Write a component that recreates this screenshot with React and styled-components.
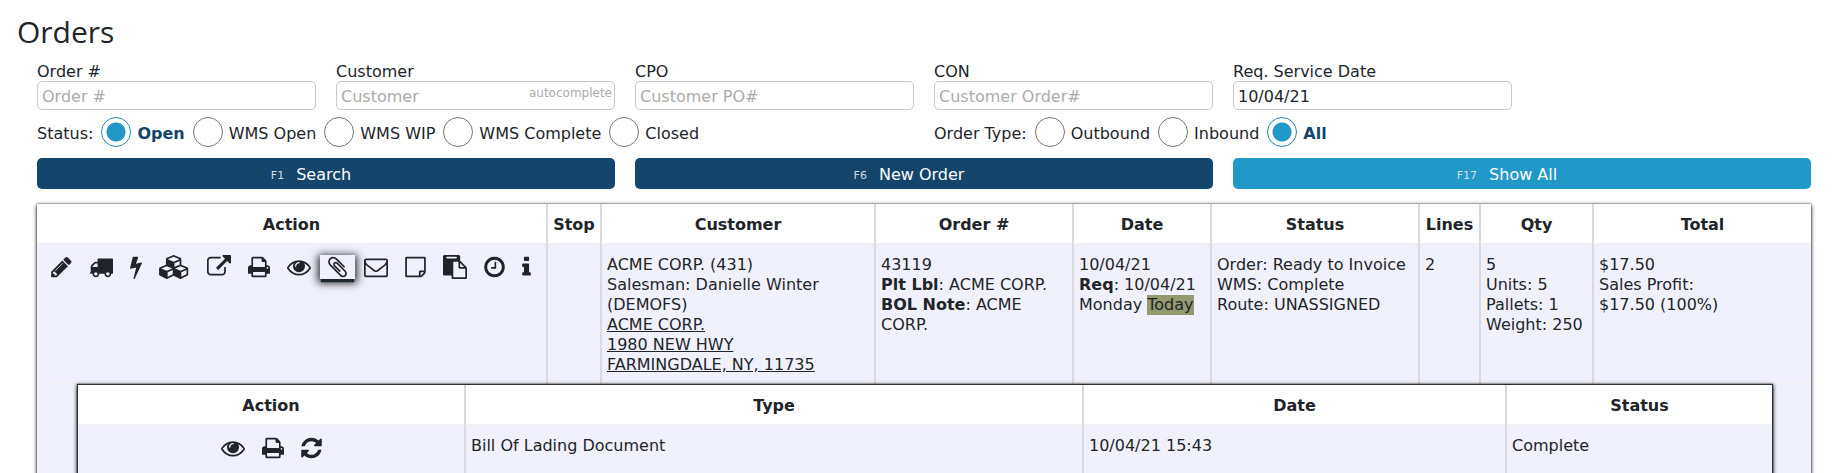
import React, { useState } from "react";
import styled, { createGlobalStyle } from "styled-components";

const GlobalStyle = createGlobalStyle`
    * {
        box-sizing: border-box;
    }
    body {
        margin: 0;
        background-color: #ffffff;
        color: #212529;
        font-family: "DejaVu Sans", Verdana, sans-serif;
        font-size: 16px;
        line-height: 20px;
        overflow: hidden;
    }
`;
const Page = styled.main`
    padding: 12px 27px 0 17px;
`;
const Title = styled.h1`
    margin: 0;
    font-family: "Open Sans", sans-serif;
    font-size: 30px;
    font-weight: 400;
    line-height: 40px;
`;
const Content = styled.div`
    padding-left: 20px;
`;
const Filters = styled.form`
    display: grid;
    grid-template-columns: repeat(6, 1fr);
    column-gap: 20px;
    padding-top: 11px;
`;
const Field = styled.div`
    position: relative;
    display: flex;
    flex-direction: column;
`;
const FieldLabel = styled.label`
    line-height: 18px;
`;
const Input = styled.input`
    width: 100%;
    height: 29px;
    padding: 2px 4px 0;
    border: 1px solid #c8c8c8;
    border-radius: 5px;
    background-color: #ffffff;
    color: #212529;
    font-family: inherit;
    font-size: 16px;
    outline: none;
    &::placeholder {
        color: #acacac;
        opacity: 1;
    }
`;
const Hint = styled.span`
    position: absolute;
    right: 3px;
    bottom: 7px;
    color: #acacac;
    font-size: 12px;
    line-height: 20px;
`;
const RadioGroup = styled.fieldset`
    grid-column: span 3;
    display: flex;
    align-items: center;
    gap: 8px;
    height: 30px;
    margin: 7px 0 11px;
    padding: 0;
    border: 0;
`;
const RadioLabel = styled.label`
    display: flex;
    align-items: center;
    gap: 6px;
    white-space: nowrap;
    &:has(input:checked) {
        color: #14456c;
        font-weight: 700;
    }
`;
const RadioText = styled.span`
    padding-top: 4px;
`;
const Radio = styled.input`
    appearance: none;
    width: 30px;
    height: 30px;
    margin: 0;
    border: 1px solid #77776a;
    border-radius: 50%;
    background-color: #ffffff;
    &:checked {
        border-color: #2484b4;
        background: radial-gradient(circle, #2199c8 9px, #ffffff 10px);
    }
`;
const Button = styled.button`
    grid-column: span 2;
    display: flex;
    justify-content: center;
    align-items: center;
    gap: 12px;
    height: 31px;
    padding: 1px 30px 0 0;
    border: 0;
    border-radius: 5px;
    background-color: ${props => props.$light ? "#2199c8" : "#14456c"};
    color: #ffffff;
    font-family: inherit;
    font-size: 16px;
    cursor: pointer;
`;
const Key = styled.small`
    padding-top: 3px;
    color: #d3dce4;
    font-size: 11px;
`;
const Table = styled.table`
    width: 100%;
    table-layout: fixed;
    border-spacing: 0;
    box-shadow: 0 1px 4px #000000, 0 0 1px #20282a;
`;
const OrdersTable = styled(Table)`
    margin-top: 15px;
`;
const DocumentsTable = styled(Table)`
    border: 1px solid #2b3436;
`;
const Col = styled.col`
    width: ${props => props.$w}px;
`;
const Th = styled.th`
    height: 40px;
    padding: 2px 0 0;
    border-bottom: 1px solid #f2f0ef;
    background-color: #ffffff;
    font-weight: 700;
    & + & {
        border-left: 2px solid #d9d9e0;
    }
`;
const Td = styled.td`
    height: ${props => props.$h || 50}px;
    padding: 11px 0 2px 5px;
    border-bottom: 1px solid #f2f0ef;
    background-color: #f1f1fd;
    vertical-align: top;
    & + & {
        border-left: 2px solid #d9d9e0;
    }
`;
const NestedTd = styled.td`
    padding: 0 42px 30px 40px;
    background-color: #f1f1fd;
`;
const Line = styled.div`
    min-height: 20px;
`;
const Address = styled.a`
    display: block;
    color: inherit;
    text-decoration: underline;
`;
const Today = styled.span`
    display: inline-block;
    background-color: #949a70;
`;
const Actions = styled.div`
    display: flex;
    justify-content: ${props => props.$center ? "center" : "flex-start"};
    gap: 1px;
    padding: ${props => props.$center ? "0 5px 0 0" : "0 0 0 1px"};
`;
const IconButton = styled.button`
    display: flex;
    height: 24px;
    padding: 0 8px;
    border: 0;
    background-color: transparent;
    color: #212529;
    cursor: pointer;
    ${props => props.$active && `
        background-color: #f1f1fd;
        box-shadow: 0 4px 1px -1px #20282a, 0 2px 8px 2px #20282a;
    `}
`;
const IconSvg = styled.svg`
    display: block;
    height: 24px;
    fill: currentColor;
`;

// [viewBox min-x, viewBox width, path], all on a 1792 high grid
const ICONS = {
    edit: [ 128, 1536, "M491 1536l91-91-235-235-91 91v107h128v128h107zm523-928q0-22-22-22-10 0-17 7l-542 542q-7 7-7 17 0 22 22 22 10 0 17-7l542-542q7-7 7-17zm-54-192l416 416-832 832h-416v-416zm683 96q0 53-37 90l-166 166-416-416 166-165q36-38 90-38 53 0 91 38l235 234q37 39 37 91z" ],
    truck: [ 0, 1792, "M640 1408q0-52-38-90t-90-38-90 38-38 90 38 90 90 38 90-38 38-90zm-384-512h384v-256h-158q-13 0-22 9l-195 195q-9 9-9 22v30zm1280 512q0-52-38-90t-90-38-90 38-38 90 38 90 90 38 90-38 38-90zm256-1088v1024q0 15-4 26.5t-13.5 18.5-16.5 11.5-23.5 6-22.5 2-25.5 0-22.5-.5q0 106-75 181t-181 75-181-75-75-181h-384q0 106-75 181t-181 75-181-75-75-181h-64q-3 0-22.5.5t-25.5 0-22.5-2-23.5-6-16.5-11.5-13.5-18.5-4-26.5q0-26 19-45t45-19v-320q0-8-.5-35t0-38 2.5-34.5 6.5-37 14-30.5 22.5-30l198-198q19-19 50.5-32t58.5-13h160v-192q0-26 19-45t45-19h1024q26 0 45 19t19 45z" ],
    bolt: [ 448, 896, "M1333 566q18 20 7 44l-540 1157q-13 25-42 25-4 0-14-2-17-5-25.5-19t-4.5-30l197-808-406 101q-4 1-12 1-18 0-31-11-18-15-13-39l201-825q4-14 16-23t28-9h328q19 0 32 12.5t13 29.5q0 8-5 18l-171 463 396-98q8-2 12-2 19 0 34 15z" ],
    cubes: [ 0, 2304, "M640 1632l384-192v-314l-384 164v342zm-64-454l404-173-404-173-404 173zm1088 454l384-192v-314l-384 164v342zm-64-454l404-173-404-173-404 173zm-448-293l384-165v-266l-384 164v267zm-64-379l441-189-441-189-441 189zm1088 518v416q0 36-19 67t-52 47l-448 224q-25 14-57 14t-57-14l-448-224q-4-2-7-4-2 2-7 4l-448 224q-25 14-57 14t-57-14l-448-224q-33-16-52-47t-19-67v-416q0-38 21.5-70t56.5-48l434-186v-400q0-38 21.5-70t56.5-48l448-192q23-10 50-10t50 10l448 192q35 16 56.5 48t21.5 70v400l434 186q36 16 57 48t21 70z" ],
    open: [ 0, 1792, "M1408 928v320q0 119-84.5 203.5t-203.5 84.5h-832q-119 0-203.5-84.5t-84.5-203.5v-832q0-119 84.5-203.5t203.5-84.5h704q14 0 23 9t9 23v64q0 14-9 23t-23 9h-704q-66 0-113 47t-47 113v832q0 66 47 113t113 47h832q66 0 113-47t47-113v-320q0-14 9-23t23-9h64q14 0 23 9t9 23zm384-864v512q0 26-19 45t-45 19-45-19l-176-176-652 652q-10 10-23 10t-23-10l-114-114q-10-10-10-23t10-23l652-652-176-176q-19-19-19-45t19-45 45-19h512q26 0 45 19t19 45z" ],
    print: [ 64, 1664, "M448 1536h896v-256h-896v256zm0-640h896v-384h-160q-40 0-68-28t-28-68v-160h-640v640zm1152 64q0-26-19-45t-45-19-45 19-19 45 19 45 45 19 45-19 19-45zm128 0v416q0 13-9.5 22.5t-22.5 9.5h-224v160q0 40-28 68t-68 28h-960q-40 0-68-28t-28-68v-160h-224q-13 0-22.5-9.5t-9.5-22.5v-416q0-79 56.5-135.5t135.5-56.5h64v-544q0-40 28-68t68-28h672q40 0 88 20t76 48l152 152q28 28 48 76t20 88v256h64q79 0 135.5 56.5t56.5 135.5z" ],
    view: [ 0, 1792, "M1664 960q-152-236-381-353 61 104 61 225 0 185-131.5 316.5t-316.5 131.5-316.5-131.5-131.5-316.5q0-121 61-225-229 117-381 353 133 205 333.5 326.5t434.5 121.5 434.5-121.5 333.5-326.5zm-720-384q0-20-14-34t-34-14q-125 0-214.5 89.5t-89.5 214.5q0 20 14 34t34 14 34-14 14-34q0-86 61-147t147-61q20 0 34-14t14-34zm848 384q0 34-20 69-140 230-376.5 368.5t-499.5 138.5-499.5-139-376.5-368q-20-35-20-69t20-69q140-229 376.5-368t499.5-139 499.5 139 376.5 368q20 35 20 69z" ],
    attach: [ 192, 1408, "M1596 1385q0 117-79 196t-196 79q-135 0-235-100l-777-776q-113-115-113-271 0-159 110-270t269-111q158 0 273 113l605 606q10 10 10 22 0 16-30.5 46.5t-46.5 30.5q-13 0-23-10l-606-607q-79-77-181-77-106 0-179 75t-73 181q0 105 76 181l776 777q63 63 145 63 64 0 106-42t42-106q0-82-63-145l-581-581q-26-24-60-24-29 0-48 19t-19 48q0 32 25 59l410 410q10 10 10 22 0 16-31 47t-47 31q-12 0-22-10l-410-410q-63-61-63-149 0-82 57-139t139-57q88 0 149 63l581 581q100 98 100 235z" ],
    mail: [ 0, 1792, "M1664 1504v-768q-32 36-69 66-268 206-426 338-51 43-83 67t-86.5 48.5-102.5 24.5h-2q-48 0-102.5-24.5t-86.5-48.5-83-67q-158-132-426-338-37-30-69-66v768q0 13 9.5 22.5t22.5 9.5h1472q13 0 22.5-9.5t9.5-22.5zm0-1051v-24.5l-.5-13-3-12.5-5.5-9-9-7.5-14-2.5h-1472q-13 0-22.5 9.5t-9.5 22.5q0 168 147 284 193 152 401 317 6 5 35 29.5t46 37.5 44.5 31.5 50.5 27.5 43 9h2q20 0 43-9t50.5-27.5 44.5-31.5 46-37.5 35-29.5q208-165 401-317 54-43 100.5-115.5t46.5-131.5zm128-37v1088q0 66-47 113t-113 47h-1472q-66 0-113-47t-47-113v-1088q0-66 47-113t113-47h1472q66 0 113 47t47 113z" ],
    note: [ 0, 1536, "M1400 1280h-248v248q29-10 41-22l185-185q12-12 22-41zm-280-128h288v-896h-1280v1280h896v-288q0-40 28-68t68-28zm416-928v1024q0 40-20 88t-48 76l-184 184q-28 28-76 48t-88 20h-1024q-40 0-68-28t-28-68v-1344q0-40 28-68t68-28h1344q40 0 68 28t28 68z" ],
    paste: [ 0, 1792, "M768 1664h896v-640h-416q-40 0-68-28t-28-68v-416h-384v1152zm256-1440v-64q0-13-9.5-22.5t-22.5-9.5h-704q-13 0-22.5 9.5t-9.5 22.5v64q0 13 9.5 22.5t22.5 9.5h704q13 0 22.5-9.5t9.5-22.5zm256 672h299l-299-299v299zm512 128v672q0 40-28 68t-68 28h-960q-40 0-68-28t-28-68v-160h-544q-40 0-68-28t-28-68v-1344q0-40 28-68t68-28h1088q40 0 68 28t28 68v328q21 13 36 28l408 408q28 28 48 76t20 88z" ],
    clock: [ 128, 1536, "M1024 544v448q0 14-9 23t-23 9h-320q-14 0-23-9t-9-23v-64q0-14 9-23t23-9h224v-352q0-14 9-23t23-9h64q14 0 23 9t9 23zm416 352q0-148-73-273t-198-198-273-73-273 73-198 198-73 273 73 273 198 198 273 73 273-73 198-198 73-273zm224 0q0 209-103 385.5t-279.5 279.5-385.5 103-385.5-103-279.5-279.5-103-385.5 103-385.5 279.5-279.5 385.5-103 385.5 103 279.5 279.5 103 385.5z" ],
    info: [ 576, 640, "M1216 1344v128q0 26-19 45t-45 19h-512q-26 0-45-19t-19-45v-128q0-26 19-45t45-19h64v-384h-64q-26 0-45-19t-19-45v-128q0-26 19-45t45-19h384q26 0 45 19t19 45v576h64q26 0 45 19t19 45zm-128-1152v192q0 26-19 45t-45 19h-256q-26 0-45-19t-19-45v-192q0-26 19-45t45-19h256q26 0 45 19t19 45z" ],
    refresh: [ 128, 1536, "M1639 1056q0 5-1 7-64 268-268 434.5t-478 166.5q-146 0-282.5-55t-243.5-157l-129 129q-19 19-45 19t-45-19-19-45v-448q0-26 19-45t45-19h448q26 0 45 19t19 45-19 45l-137 137q71 66 161 102t187 36q134 0 250-65t186-179q11-17 53-117 8-23 30-23h192q13 0 22.5 9.5t9.5 22.5zm25-800v448q0 26-19 45t-45 19h-448q-26 0-45-19t-19-45 19-45l138-138q-148-137-349-137-134 0-250 65t-186 179q-11 17-53 117-8 23-30 23h-199q-13 0-22.5-9.5t-9.5-22.5v-7q65-268 270-434.5t480-166.5q146 0 284 55.5t245 156.5l130-129q19-19 45-19t45 19 19 45z" ]
};

const ORDER_ACTIONS = [ "edit", "truck", "bolt", "cubes", "open", "print", "view", "attach", "mail", "note", "paste", "clock", "info" ];
const DOCUMENT_ACTIONS = [ "view", "print", "refresh" ];

const ORDER_COLS = [
    [ "Action", 509 ], [ "Stop", 54 ], [ "Customer", 274 ], [ "Order #", 198 ], [ "Date", 138 ],
    [ "Status", 208 ], [ "Lines", 61 ], [ "Qty", 113 ], [ "Total", 219 ]
];
const DOCUMENT_COLS = [ [ "Action", 386 ], [ "Type", 618 ], [ "Date", 423 ], [ "Status", 267 ] ];

function Icon({ name }) {
    const [ x, width, path ] = ICONS[name];
    return (
        <IconSvg width={Math.round(width * 24 / 1792)} viewBox={`${x} 0 ${width} 1792`} aria-hidden="true">
            <path d={path} />
        </IconSvg>
    );
}

function ActionBar({ names, active, center }) {
    return (
        <Actions $center={center}>
            {names.map(name => (
                <IconButton key={name} type="button" aria-label={name} $active={name === active}>
                    <Icon name={name} />
                </IconButton>
            ))}
        </Actions>
    );
}

function Head({ cols }) {
    return (
        <>
            <colgroup>
                {cols.map(([ name, width ]) => <Col key={name} $w={width} />)}
            </colgroup>
            <thead>
                <tr>
                    {cols.map(([ name ]) => <Th key={name} scope="col">{name}</Th>)}
                </tr>
            </thead>
        </>
    );
}

function TextField({ id, label, hint, ...rest }) {
    return (
        <Field>
            <FieldLabel htmlFor={id}>{label}</FieldLabel>
            <Input id={id} type="text" {...rest} />
            {hint && <Hint>{hint}</Hint>}
        </Field>
    );
}

function Radios({ name, label, options, initial }) {
    const [ value, setValue ] = useState(initial);
    return (
        <RadioGroup aria-label={label}>
            <RadioText>{label}:</RadioText>
            {options.map(option => (
                <RadioLabel key={option}>
                    <Radio type="radio" name={name} checked={value === option} onChange={() => setValue(option)} />
                    <RadioText>{option}</RadioText>
                </RadioLabel>
            ))}
        </RadioGroup>
    );
}

function App() {
    return (
        <Page>
            <GlobalStyle />
            <Title>Orders</Title>
            <Content>
                <Filters onSubmit={e => e.preventDefault()}>
                    <TextField id="order" label="Order #" placeholder="Order #" />
                    <TextField id="customer" label="Customer" placeholder="Customer" hint="autocomplete" />
                    <TextField id="cpo" label="CPO" placeholder="Customer PO#" />
                    <TextField id="con" label="CON" placeholder="Customer Order#" />
                    <TextField id="date" label="Req. Service Date" defaultValue="10/04/21" />
                    <div />
                    <Radios name="status" label="Status" initial="Open" options={[ "Open", "WMS Open", "WMS WIP", "WMS Complete", "Closed" ]} />
                    <Radios name="type" label="Order Type" initial="All" options={[ "Outbound", "Inbound", "All" ]} />
                    <Button type="submit"><Key>F1</Key>Search</Button>
                    <Button type="button"><Key>F6</Key>New Order</Button>
                    <Button type="button" $light><Key>F17</Key>Show All</Button>
                </Filters>
                <OrdersTable>
                    <Head cols={ORDER_COLS} />
                    <tbody>
                        <tr>
                            <Td $h={140}><ActionBar names={ORDER_ACTIONS} active="attach" /></Td>
                            <Td />
                            <Td>
                                <Line>ACME CORP. (431)</Line>
                                <Line>Salesman: Danielle Winter (DEMOFS)</Line>
                                <Address href="#address">ACME CORP.<br />1980 NEW HWY<br />FARMINGDALE, NY, 11735</Address>
                            </Td>
                            <Td>
                                <Line>43119</Line>
                                <Line><b>Plt Lbl</b>: ACME CORP.</Line>
                                <Line><b>BOL Note</b>: ACME CORP.</Line>
                            </Td>
                            <Td>
                                <Line>10/04/21</Line>
                                <Line><b>Req</b>: 10/04/21</Line>
                                <Line>Monday <Today>Today</Today></Line>
                            </Td>
                            <Td>
                                <Line>Order: Ready to Invoice</Line>
                                <Line>WMS: Complete</Line>
                                <Line>Route: UNASSIGNED</Line>
                            </Td>
                            <Td>2</Td>
                            <Td>
                                <Line>5</Line>
                                <Line>Units: 5</Line>
                                <Line>Pallets: 1</Line>
                                <Line>Weight: 250</Line>
                            </Td>
                            <Td>
                                <Line>$17.50</Line>
                                <Line>Sales Profit:</Line>
                                <Line>$17.50 (100%)</Line>
                            </Td>
                        </tr>
                        <tr>
                            <NestedTd colSpan={9}>
                                <DocumentsTable>
                                    <Head cols={DOCUMENT_COLS} />
                                    <tbody>
                                        <tr>
                                            <Td><ActionBar names={DOCUMENT_ACTIONS} center /></Td>
                                            <Td>Bill Of Lading Document</Td>
                                            <Td>10/04/21 15:43</Td>
                                            <Td>Complete</Td>
                                        </tr>
                                    </tbody>
                                </DocumentsTable>
                            </NestedTd>
                        </tr>
                    </tbody>
                </OrdersTable>
            </Content>
        </Page>
    );
}

export default App;
